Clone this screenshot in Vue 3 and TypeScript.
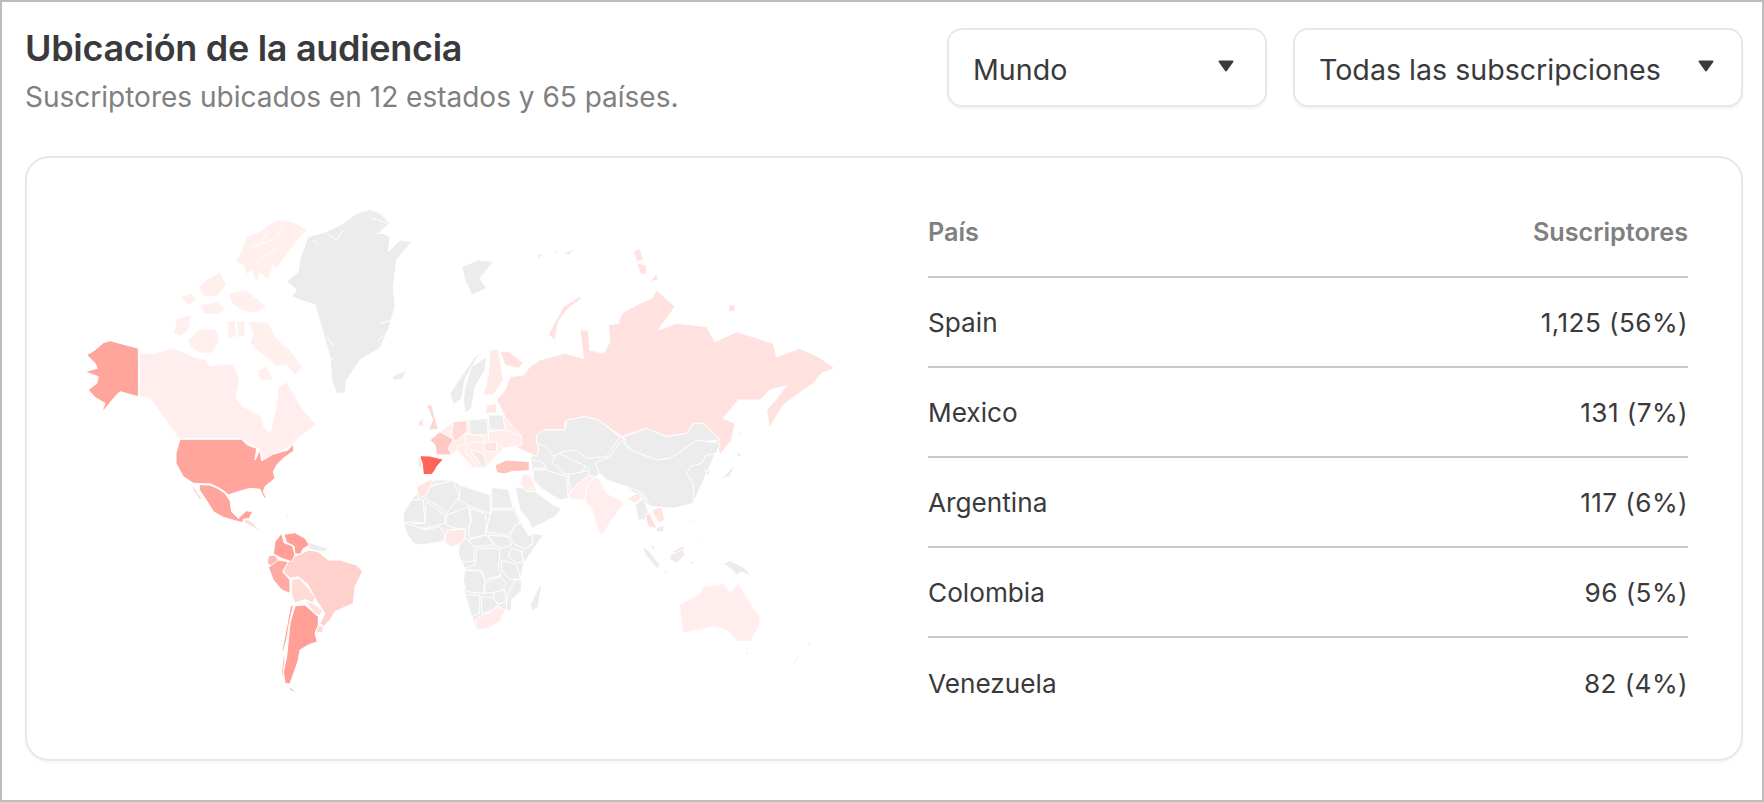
<script setup lang="ts">
interface Shape { f: string; d: string }
interface Group { x: number; y: number; shapes: Shape[] }

const G = '#ececec'
const C = '#fff0ee'
const R = '#ffe2df'
const rows = [
  { name: 'Spain', value: '1,125 (56%)' },
  { name: 'Mexico', value: '131 (7%)' },
  { name: 'Argentina', value: '117 (6%)' },
  { name: 'Colombia', value: '96 (5%)' },
  { name: 'Venezuela', value: '82 (4%)' },
]

const groups: Group[] = [
  { x: 60, y: 190, shapes: [
    { f: '#ffa59c', d: 'M80,495 L105,480 L130,458 L150,452 L235,475 L236,620 L205,612 L180,605 L165,620 L145,645 L125,668 L135,640 L105,622 L85,600 L110,580 L115,560 L75,545 L112,535 L105,520 Z' },
    { f: '#ffeeed', d: 'M238,490 L280,490 L340,475 L400,500 L440,510 L450,528 L520,520 L540,570 L528,625 L550,650 L605,680 L612,712 L630,725 L640,690 L650,640 L655,590 L680,575 L700,610 L730,660 L770,705 L720,740 L700,762 L650,790 L610,810 L600,780 L560,755 L530,745 L355,745 L310,680 L270,625 L238,620 Z' },
    { f: C, d: 'M525,215 L545,180 L560,140 L600,125 L625,105 L650,90 L700,95 L740,120 L715,150 L700,170 L665,215 L650,235 L640,225 L625,270 L600,250 L590,280 L575,240 L560,255 L550,225 Z' },
    { f: 'none', d: 'M575,170 L640,150 M590,215 L650,175 M620,130 L600,165 M670,110 L650,140' },
    { f: C, d: 'M340,430 L350,385 L395,375 L385,420 L360,440 Z' },
    { f: C, d: 'M385,450 L420,415 L470,420 L480,455 L455,490 L420,490 L390,470 Z' },
    { f: C, d: 'M360,320 L395,310 L410,330 L385,345 Z' },
    { f: C, d: 'M415,290 L440,270 L480,245 L500,285 L470,320 L430,320 Z' },
    { f: C, d: 'M420,345 L470,335 L500,360 L470,375 L430,370 Z' },
    { f: C, d: 'M505,310 L560,300 L620,350 L590,370 L545,360 L515,340 Z' },
    { f: C, d: 'M500,395 L525,390 L530,440 L505,445 Z' },
    { f: C, d: 'M530,395 L555,390 L555,440 L535,440 Z' },
    { f: C, d: 'M565,395 L595,395 L625,400 L650,445 L690,480 L728,530 L705,555 L680,525 L650,530 L620,505 L590,480 L570,460 L580,430 Z' },
    { f: C, d: 'M590,540 L620,530 L640,570 L600,570 Z' },
    { f: G, d: 'M680,275 L715,245 L720,205 L745,140 L800,125 L850,100 L890,70 L930,58 L960,70 L990,100 L960,125 L990,140 L985,185 L1020,150 L1055,155 L1010,210 L1000,290 L1005,350 L985,420 L960,475 L900,510 L860,570 L855,610 L830,610 L815,570 L810,500 L790,430 L765,345 L720,330 L695,320 L710,300 Z' },
    { f: 'none', d: 'M760,150 L775,165 M800,130 L830,150 L850,120 M935,85 L985,100 M950,130 L985,130 M990,180 L1000,150 M960,400 L1000,390 M955,450 L990,420 M800,440 L820,470 M800,520 L825,500' },
    { f: G, d: 'M995,560 L1040,540 L1030,565 L1005,572 Z' },
  ] },
  { x: 160, y: 430, shapes: [
    { f: '#ffa59c', d: 'M60,28 L245,28 L262,45 L290,55 L285,90 L300,60 L305,92 L340,72 L385,60 L398,42 L402,62 L370,85 L350,105 L340,125 L345,145 L315,170 L310,185 L322,210 L310,200 L300,178 L270,175 L225,188 L205,195 L195,185 L170,170 L150,162 L100,160 L70,140 L48,100 L48,70 Z' },
    { f: '#ffa59c', d: 'M118,164 L150,165 L175,176 L195,190 L210,212 L215,245 L235,265 L258,242 L278,245 L268,265 L250,268 L248,278 L225,272 L190,262 L160,245 L140,212 L118,180 Z' },
    { f: '#ffa59c', d: 'M97,165 L112,190 L130,212 L118,205 L100,180 Z' },
    { f: '#ffdedb', d: 'M250,272 L265,267 L280,280 L302,305 L290,298 L265,285 Z' },
    { f: '#ffcfcb', d: 'M375,255 L388,258 L382,262 Z' },
  ] },
  { x: 240, y: 480, shapes: [
    { f: G, d: 'M205,185 L230,195 L265,205 L255,215 L225,212 L205,205 Z' },
    { f: '#ffd1cd', d: 'M150,232 L175,225 L205,210 L235,215 L265,240 L300,240 L350,255 L368,275 L345,320 L340,370 L285,395 L270,420 L250,440 L240,430 L255,400 L225,355 L205,315 L175,290 L150,295 L130,275 Z' },
    { f: '#ff9f96', d: 'M132,163 L165,158 L195,175 L208,195 L188,208 L182,222 L165,222 L162,198 L140,188 Z' },
    { f: '#ff9f96', d: 'M125,160 L132,188 L158,198 L165,225 L155,245 L125,235 L100,222 L105,185 Z' },
    { f: '#ffb8b1', d: 'M85,228 L105,225 L115,240 L95,258 L82,250 Z' },
    { f: '#ffaaa2', d: 'M85,262 L115,240 L145,245 L128,275 L150,300 L150,340 L125,330 L100,300 Z' },
    { f: '#ffdad7', d: 'M155,300 L178,295 L205,325 L225,352 L220,370 L195,358 L165,370 L155,345 Z' },
    { f: '#ffe0de', d: 'M198,362 L222,372 L248,392 L238,408 L220,395 Z' },
    { f: '#ffdad7', d: 'M232,435 L250,440 L248,458 L228,458 Z' },
    { f: '#ff9f96', d: 'M165,378 L195,375 L235,410 L235,435 L225,460 L232,485 L205,495 L180,510 L175,540 L165,570 L150,612 L135,610 L130,575 L140,530 L145,480 L150,430 Z' },
    { f: '#ffaaa2', d: 'M152,375 L160,378 L148,430 L140,480 L130,515 L126,512 L140,440 Z' },
    { f: '#ffaaa2', d: 'M130,530 L135,530 L128,600 L125,575 Z' },
    { f: '#ffaaa2', d: 'M150,620 L170,640 L150,630 Z' },
  ] },
  { x: 400, y: 480, shapes: [
    { f: G, d: 'M10,98 L35,60 L50,40 L95,0 L160,0 L180,15 L270,45 L275,22 L325,28 L345,85 L365,130 L385,165 L430,165 L405,200 L372,250 L362,295 L365,330 L335,360 L335,390 L315,390 L300,425 L265,445 L230,450 L215,410 L195,345 L190,300 L195,265 L175,225 L178,195 L150,200 L130,185 L65,195 L40,190 L20,160 L10,130 Z' },
    { f: '#ffdedb', d: 'M50,38 L95,0 L105,10 L80,30 L60,40 Z' },
    { f: G, d: 'M90,20 L160,0 L178,50 L140,100 L125,85 L75,55 L55,40 Z' },
    { f: G, d: 'M10,98 L35,60 L70,60 L75,130 L35,125 L10,130 Z' },
    { f: G, d: 'M78,65 L135,105 L135,130 L95,140 L75,145 L40,140 L35,130 L75,130 Z' },
    { f: G, d: 'M140,105 L205,80 L212,130 L195,148 L165,145 L138,135 Z' },
    { f: G, d: 'M180,15 L270,45 L272,100 L210,80 L178,60 Z' },
    { f: G, d: 'M275,22 L325,28 L340,85 L275,85 Z' },
    { f: G, d: 'M275,90 L342,90 L360,130 L340,150 L320,165 L260,155 L265,125 Z' },
    { f: G, d: 'M210,85 L255,100 L260,130 L255,165 L210,175 L205,150 L215,120 Z' },
    { f: G, d: 'M345,135 L365,130 L385,165 L415,175 L380,205 L345,195 L330,170 Z' },
    { f: G, d: 'M395,160 L430,165 L405,200 L372,250 L365,215 L400,190 Z' },
    { f: G, d: 'M205,180 L260,165 L280,195 L230,200 L210,200 Z' },
    { f: G, d: 'M265,165 L325,170 L335,195 L305,205 L285,195 Z' },
    { f: G, d: 'M232,205 L285,205 L300,210 L295,270 L305,285 L255,300 L245,270 L200,270 L195,265 L225,255 Z' },
    { f: G, d: 'M335,205 L365,215 L370,245 L350,250 L325,230 Z' },
    { f: G, d: 'M305,240 L350,255 L362,295 L330,300 L305,270 Z' },
    { f: G, d: 'M10,130 L35,135 L75,150 L120,140 L135,165 L130,185 L95,190 L65,195 L40,190 L20,160 Z' },
    { f: '#ffe9e7', d: 'M140,150 L195,148 L195,175 L175,195 L150,200 L135,185 Z' },
    { f: G, d: 'M178,195 L200,175 L225,205 L220,245 L185,245 L175,225 Z' },
    { f: G, d: 'M195,270 L245,275 L255,305 L250,340 L200,335 L190,300 Z' },
    { f: G, d: 'M255,310 L300,290 L320,310 L300,335 L255,340 Z' },
    { f: G, d: 'M345,300 L365,300 L365,330 L335,360 L335,390 L318,392 L322,350 L330,330 Z' },
    { f: G, d: 'M285,335 L315,330 L318,365 L295,372 L280,355 Z' },
    { f: G, d: 'M245,350 L280,355 L295,375 L270,395 L245,400 Z' },
    { f: G, d: 'M195,345 L240,345 L238,400 L215,410 Z' },
    { f: '#ffeceb', d: 'M225,420 L245,405 L265,400 L295,378 L315,390 L300,425 L265,445 L230,450 Z' },
    { f: G, d: 'M420,315 L425,318 L415,380 L398,392 L390,375 Z' },
    { f: G, d: 'M345,20 L400,30 L460,75 L485,85 L465,110 L395,145 L385,120 L360,90 Z' },
    { f: '#ffe5e2', d: 'M365,0 L405,5 L405,30 L375,15 Z' },
  ] },
  { x: 430, y: 210, shapes: [
    { f: G, d: 'M300,750 L340,660 L570,680 L680,750 L870,700 L790,880 L660,890 L590,830 L510,790 L415,865 L390,870 L310,810 Z' },
    { f: R, d: 'M200,570 L225,540 L240,500 L280,495 L300,470 L330,450 L405,430 L460,445 L450,360 L475,360 L480,420 L520,430 L540,395 L535,345 L565,340 L575,310 L630,280 L665,265 L680,240 L735,290 L685,360 L740,340 L830,350 L855,395 L920,365 L1030,400 L1040,440 L1110,415 L1165,440 L1215,475 L1175,490 L1150,520 L1110,548 L1060,585 L1018,655 L1010,600 L1045,560 L1068,528 L1020,540 L990,570 L925,570 L880,625 L915,640 L905,690 L870,735 L860,700 L820,640 L790,640 L770,670 L710,680 L650,655 L575,680 L505,630 L460,620 L405,635 L405,660 L340,660 L320,680 L325,720 L320,740 L265,715 L235,640 Z' },
    { f: R, d: 'M210,425 L240,425 L280,460 L265,475 L225,465 Z' },
    { f: R, d: 'M355,375 L375,335 L400,290 L450,258 L455,265 L415,295 L385,335 L375,390 Z' },
    { f: R, d: 'M610,125 L630,115 L640,150 L620,155 Z' },
    { f: R, d: 'M620,160 L650,165 L650,195 L630,190 Z' },
    { f: R, d: 'M660,215 L680,190 L685,210 Z' },
    { f: R, d: 'M895,285 L915,285 L915,305 L897,305 Z' },
    { f: R, d: 'M925,645 L932,680 L925,680 Z' },
    { f: R, d: 'M320,135 L345,128 L325,145 Z' },
    { f: R, d: 'M370,120 L385,125 L375,130 Z' },
    { f: R, d: 'M400,128 L435,118 L415,135 Z' },
    { f: '#ffeae8', d: 'M180,420 L205,415 L220,510 L190,555 L160,555 L175,490 Z' },
    { f: G, d: 'M60,550 L100,490 L135,440 L170,425 L140,445 L105,510 L95,565 L70,585 Z' },
    { f: G, d: 'M105,530 L125,470 L170,440 L165,480 L135,530 L125,595 L105,610 L100,570 Z' },
    { f: G, d: 'M95,170 L145,150 L190,155 L170,180 L150,205 L170,235 L125,255 L115,230 L105,210 Z' },
    { f: G, d: 'M580,680 L650,655 L710,680 L770,670 L790,640 L820,640 L870,690 L790,700 L720,745 L680,750 L620,735 L590,705 Z' },
    { f: G, d: 'M495,760 L540,740 L575,690 L600,720 L680,750 L720,745 L780,705 L800,690 L870,700 L860,730 L830,735 L815,760 L780,770 L770,790 L790,820 L790,880 L730,895 L660,890 L640,850 L590,830 L530,810 L510,790 Z' },
    { f: G, d: 'M320,675 L340,660 L405,660 L410,630 L465,620 L505,630 L570,680 L550,710 L530,740 L470,745 L440,720 L400,725 L370,740 L350,710 L320,700 Z' },
    { f: G, d: 'M365,755 L385,730 L470,770 L440,795 L400,790 Z' },
    { f: G, d: 'M310,780 L345,780 L410,800 L415,865 L390,870 L340,840 L310,810 Z' },
    { f: G, d: 'M415,795 L480,780 L465,830 L420,845 Z' },
    { f: G, d: 'M300,750 L335,755 L350,775 L310,775 Z' },
    { f: G, d: 'M880,800 L915,765 L900,800 L860,808 Z' },
    { f: G, d: 'M920,725 L938,735 L925,742 Z' },
    { f: G, d: 'M825,780 L840,785 L835,800 Z' },
  ] },
  { x: 390, y: 380, shapes: [
    { f: '#ffeceb', d: 'M120,180 L190,125 L340,105 L395,170 L395,195 L340,205 L285,265 L250,265 L200,210 L185,225 L135,195 Z' },
    { f: '#ffe5e2', d: 'M85,235 L95,240 L95,262 L85,265 Z' },
    { f: '#ff6458', d: 'M90,227 L120,228 L160,238 L142,258 L134,272 L126,283 L100,284 L97,250 L92,238 Z' },
    { f: '#ffc8c3', d: 'M120,180 L150,155 L190,178 L175,205 L185,225 L140,225 L135,195 Z' },
    { f: '#ffd7d4', d: 'M110,75 L125,75 L140,130 L145,148 L115,150 L128,120 Z' },
    { f: '#ffe6e4', d: 'M85,125 L100,115 L100,140 L85,140 Z' },
    { f: '#ffdad7', d: 'M190,125 L230,122 L232,155 L195,185 L185,165 Z' },
    { f: G, d: 'M238,120 L290,115 L295,165 L240,165 Z' },
    { f: G, d: 'M295,105 L340,105 L345,150 L298,150 Z' },
    { f: '#ffeceb', d: 'M295,155 L345,150 L395,170 L395,195 L340,205 L295,180 Z' },
    { f: '#ffe5e2', d: 'M280,190 L320,185 L320,215 L285,215 Z' },
    { f: '#ffeceb', d: 'M205,195 L235,195 L225,215 L265,260 L250,265 L215,225 L200,210 Z' },
    { f: '#f4e8e7', d: 'M240,210 L280,220 L290,250 L280,265 L260,235 Z' },
    { f: '#ffeceb', d: 'M225,160 L285,170 L285,185 L225,190 Z' },
    { f: '#ffe9e7', d: 'M290,75 L320,70 L320,100 L285,100 Z' },
    { f: '#ffc3be', d: 'M315,255 L350,240 L418,245 L418,272 L365,275 L345,282 L320,278 Z' },
    { f: '#ffeceb', d: 'M400,280 L425,290 L440,335 L410,335 L390,310 Z' },
    { f: '#ffe5e2', d: 'M80,320 L130,295 L110,345 L85,355 Z' },
  ] },
  { x: 500, y: 440, shapes: [
    { f: '#ffeeed', d: 'M265,120 L290,110 L305,130 L320,160 L370,185 L370,195 L335,240 L305,290 L295,270 L275,205 L258,190 L255,165 Z' },
    { f: '#ffeeed', d: 'M205,165 L225,140 L265,105 L285,110 L262,135 L255,180 L215,180 Z' },
    { f: '#ffe8e6', d: 'M380,175 L415,158 L430,170 L405,190 Z' },
    { f: G, d: 'M405,195 L430,175 L445,215 L435,240 L415,240 Z' },
    { f: '#ffdedb', d: 'M435,225 L450,220 L470,265 L445,260 Z' },
    { f: '#ffe5e2', d: 'M455,210 L485,200 L495,240 L475,250 Z' },
    { f: G, d: 'M470,262 L495,255 L490,275 L470,275 Z' },
    { f: '#ffdedb', d: 'M450,315 L465,320 L462,332 Z' },
    { f: '#ffdedb', d: 'M515,335 L550,318 L555,325 L525,340 Z' },
    { f: '#ffdedb', d: 'M578,235 L585,240 L578,250 Z' },
    { f: '#ffdedb', d: 'M600,298 L607,300 L602,308 Z' },
    { f: G, d: 'M425,320 L445,330 L480,375 L470,385 L440,350 Z' },
    { f: G, d: 'M510,345 L550,328 L555,345 L530,370 L510,360 Z' },
    { f: G, d: 'M568,362 L585,365 L578,375 Z' },
    { f: G, d: 'M670,370 L690,362 L735,385 L755,410 L725,395 L710,405 L690,385 Z' },
    { f: G, d: 'M485,390 L525,398 L495,398 Z' },
    { f: '#ffeeed', d: 'M537,495 L600,460 L610,440 L670,430 L690,455 L715,430 L735,465 L780,530 L780,555 L750,605 L712,605 L680,570 L640,560 L550,580 Z' },
    { f: '#ffeeed', d: 'M735,635 L748,635 L740,650 Z' },
    { f: '#ffeeed', d: 'M925,605 L935,610 L920,630 Z' },
    { f: '#ffeeed', d: 'M905,640 L880,680 L880,665 Z' },
  ] },
]
</script>

<template>
  <div class="frame">
    <header class="head">
      <div class="titles">
        <h1>Ubicación de la audiencia</h1>
        <p>Suscriptores ubicados en 12 estados y 65 países.</p>
      </div>
      <div class="selects">
        <div class="select world">
          <span>Mundo</span>
          <svg class="caret" width="16" height="12" viewBox="0 0 16 12"><path d="M1.5 1.5h13L8 10.5z" fill="#3a3a3c" stroke="#3a3a3c" stroke-width="2" stroke-linejoin="round" /></svg>
        </div>
        <div class="select subs">
          <span>Todas las subscripciones</span>
          <svg class="caret" width="16" height="12" viewBox="0 0 16 12"><path d="M1.5 1.5h13L8 10.5z" fill="#3a3a3c" stroke="#3a3a3c" stroke-width="2" stroke-linejoin="round" /></svg>
        </div>
      </div>
    </header>
    <section class="card">
      <svg class="map" width="875" height="598" viewBox="27 158 875 598">
        <g v-for="(g, i) in groups" :key="i" :transform="`translate(${g.x} ${g.y}) scale(0.3333)`">
          <path v-for="(s, j) in g.shapes" :key="j" :d="s.d" :fill="s.f" stroke="#fff" stroke-width="3" stroke-linejoin="round" />
        </g>
      </svg>
      <div class="table">
        <div class="row th"><span>País</span><span>Suscriptores</span></div>
        <div v-for="r in rows" :key="r.name" class="row"><span>{{ r.name }}</span><span class="num">{{ r.value }}</span></div>
      </div>
    </section>
  </div>
</template>

<style scoped>
.frame {
  width: 1764px;
  height: 802px;
  box-sizing: border-box;
  border: 2px solid #bdbdbd;
  background: #fff;
  padding: 26px 19px 0 23px;
  font-family: Inter, "Liberation Sans", sans-serif;
  color: #3a3a3c;
  overflow: hidden;
}
.head {
  display: flex;
  justify-content: space-between;
  align-items: flex-start;
  height: 128px;
}
h1 {
  margin: 0;
  font-size: 36px;
  line-height: 40px;
  font-weight: 600;
  letter-spacing: -0.3px;
}
.titles p {
  margin: 12px 0 0;
  font-size: 28px;
  line-height: 34px;
  color: #808080;
}
.selects {
  display: flex;
  gap: 26px;
}
.select {
  box-sizing: border-box;
  height: 79px;
  display: flex;
  align-items: center;
  justify-content: space-between;
  border: 2px solid #e8e8e8;
  border-radius: 15px;
  box-shadow: 0 2px 3px rgba(0, 0, 0, 0.05);
  font-size: 28.6px;
  background: #fff;
}
.select span { margin-top: 3px; }
.caret { margin-top: -3px; }
.world { width: 320px; padding: 0 31px 0 24px; }
.subs { width: 450px; padding: 0 27px 0 24px; }
.card {
  box-sizing: border-box;
  width: 1718px;
  height: 605px;
  border: 2px solid #e8e8e8;
  border-radius: 24px;
  box-shadow: 0 2px 3px rgba(0, 0, 0, 0.04);
  display: flex;
}
.map { flex: none; }
.table {
  width: 760px;
  margin-left: 26px;
  padding-top: 30px;
}
.row {
  height: 90px;
  box-sizing: border-box;
  display: flex;
  align-items: center;
  justify-content: space-between;
  font-size: 26.2px;
  border-bottom: 2px solid #c8c8c8;
}
.row:last-child { border-bottom: none; }
.num { letter-spacing: 0.4px; }
.th {
  font-size: 25.2px;
  font-weight: 600;
  color: #808080;
}
</style>
